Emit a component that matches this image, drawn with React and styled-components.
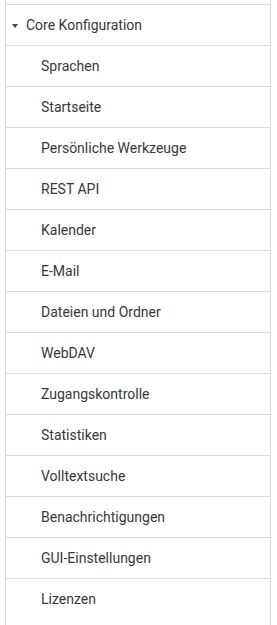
import React from 'react';
import styled, { createGlobalStyle } from 'styled-components';

const items = [
  'Sprachen',
  'Startseite',
  'Persönliche Werkzeuge',
  'REST API',
  'Kalender',
  'E-Mail',
  'Dateien und Ordner',
  'WebDAV',
  'Zugangskontrolle',
  'Statistiken',
  'Volltextsuche',
  'Benachrichtigungen',
  'GUI-Einstellungen',
  'Lizenzen',
];

const App = () => {
  return (
    <>
      <GlobalStyle />
      <Tree>
        <Stub />
        <Row>
          <Caret />
          <Label>Core Konfiguration</Label>
        </Row>
        {items.map((item) => (
          <Row key={item} $child>
            <Label>{item}</Label>
          </Row>
        ))}
        <Stub />
      </Tree>
    </>
  );
};

export default App;

const GlobalStyle = createGlobalStyle`
  html, body {
    margin: 0;
    padding: 0;
    background: #fff;
  }
  body {
    font-family: Roboto, "Liberation Sans", sans-serif;
    overflow: hidden;
  }
`;

const Tree = styled.ul`
  list-style: none;
  margin: 0 0 0 5px;
  padding: 0;
  width: 264px;
  height: 625px;
  border-left: 1px solid #dadada;
  border-right: 1px solid #dadada;
  overflow: hidden;
`;

const Stub = styled.li`
  height: 4px;
`;

const Row = styled.li`
  display: flex;
  align-items: center;
  height: 40px;
  border-top: 1px solid #dadada;
  padding-left: ${(p) => (p.$child ? '35px' : '5px')};
`;

const Caret = styled.span`
  width: 0;
  height: 0;
  border-left: 3.5px solid transparent;
  border-right: 3.5px solid transparent;
  border-top: 4px solid #444;
  margin: 1px 8px 0 1px;
`;

const Label = styled.span`
  font-size: 14px;
  color: #383838;
`;
